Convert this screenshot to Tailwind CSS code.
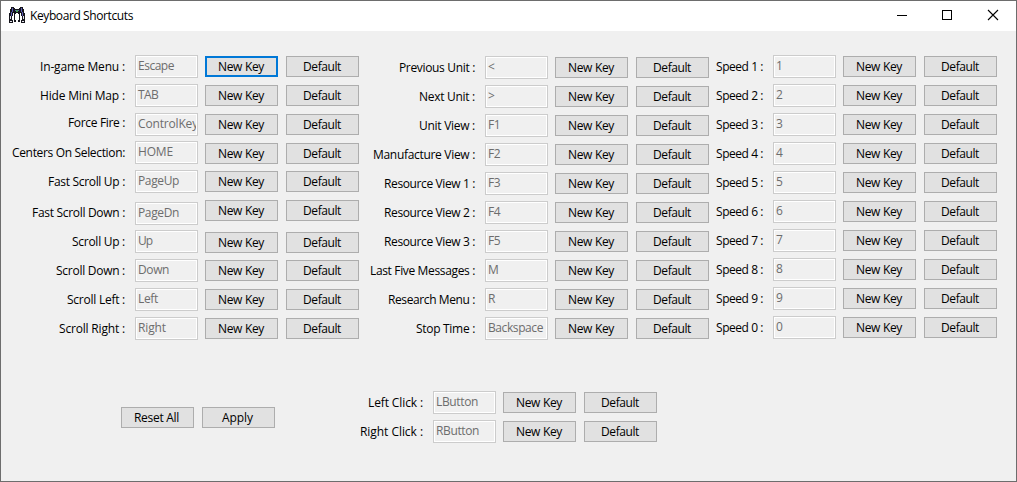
<!DOCTYPE html>
<html lang="en">
<head>
<meta charset="utf-8">
<title>Keyboard Shortcuts</title>
<script src="https://cdn.jsdelivr.net/npm/@tailwindcss/browser@4"></script>
</head>
<body class="w-[1017px] h-[482px] overflow-hidden font-['Open_Sans','Noto_Sans',sans-serif] text-[12px] leading-[17px] text-black">
<div class="w-[1017px] h-[482px] border border-[#6d6d6d] bg-[#f0f0f0] flex flex-col">
  <header class="h-[30px] shrink-0 bg-white flex">
    <svg class="w-4 h-4 mt-[6px] ml-2 shrink-0" viewBox="0 0 16 16" shape-rendering="crispEdges">
      <path fill="#15151c" d="M2 0h3v1h1v1h4V1h1V0h3v2h1v4h1v10h-4v-3h1V9h-1V6h-1v9H9v-2h1V7H9V6H7v1H6v6h1v2H5V6H4v3H3v4h1v3H0V6h1V2h1z"/>
      <path stroke="#5c5cb4" fill="none" d="M3.500 1v4M2.500 5v4M12.500 1v4M13.500 5v4M6 3.500h1M9 3.500h1"/>
      <path stroke="#e4e4ec" fill="none" d="M1 14.500h2M13 14.500h2M1.500 9v3M14.500 9v3"/>
      <path fill="#4c9a5a" d="M7 3h2v2H7z"/>
    </svg>
    <h1 class="ml-[5px] mt-[6px] whitespace-nowrap"><span data-w="103">Keyboard Shortcuts</span></h1>
    <div class="ml-auto flex">
      <svg class="w-[46px] h-[30px]" viewBox="0 0 46 30" shape-rendering="crispEdges"><path stroke="#000" d="M19 14.500h10"/></svg>
      <svg class="w-[46px] h-[30px]" viewBox="0 0 46 30" shape-rendering="crispEdges"><rect x="18.500" y="9.500" width="9" height="9" fill="none" stroke="#000"/></svg>
      <svg class="w-[46px] h-[30px]" viewBox="0 0 46 30"><path stroke="#000" stroke-width="1.100" d="M18 9l10 10M28 9L18 19"/></svg>
    </div>
  </header>
  <main class="flex flex-col">
    <div class="flex pt-[24px] h-[360px]">
      <section id="c1" class="w-[358px] shrink-0"></section>
      <section id="c2" class="w-[350px] shrink-0"></section>
      <section id="c3" class="w-[288px] shrink-0"></section>
    </div>
    <div class="flex">
      <div class="flex gap-2 pl-[120px] pt-[16px] w-[306px] shrink-0">
        <button class="w-[73px] h-[21px] bg-[#e1e1e1] border border-[#adadad] flex justify-center whitespace-nowrap pt-px pr-[2px]"><span data-w="45">Reset All</span></button>
        <button class="w-[73px] h-[21px] bg-[#e1e1e1] border border-[#adadad] flex justify-center whitespace-nowrap pt-px pr-[2px]"><span data-w="31">Apply</span></button>
      </div>
      <section id="c4" class="w-[350px] shrink-0"></section>
    </div>
  </main>
</div>
<script>
// Row: label, label width, key text, key width, label / box / button vertical offsets in a 29px row
const base = [0, 0, 1];
const columns = {
  c1: [
    ['In-game Menu :', 85, 'Escape', 36, 0, 0, 1],
    ['Hide Mini Map :', 85, 'TAB', 20, 0, 0, 1],
    ['Force Fire :', 57, 'ControlKey', 60, -2, 0, 1],
    ['Centers On Selection:', 113, 'HOME', 35, -1, -1, 1],
    ['Fast Scroll Up :', 77, 'PageUp', 41, -1, -1, 0],
    ['Fast Scroll Down :', 93, 'PageDn', 41, 1, 2, 0],
    ['Scroll Up :', 53, 'Up', 14, 1, 1, 3],
    ['Scroll Down :', 69, 'Down', 31, 1, 1, 2],
    ['Scroll Left :', 58, 'Left', 20, 1, 1, 2],
    ['Scroll Right :', 66, 'Right', 28, 1, 1, 2]
  ],
  c2: [
    ['Previous Unit :', 76, '&lt;', 7], ['Next Unit :', 56, '&gt;', 7], ['Unit View :', 56, 'F1', 12],
    ['Manufacture View :', 102, 'F2', 12], ['Resource View 1 :', 91, 'F3', 12],
    ['Resource View 2 :', 91, 'F4', 12], ['Resource View 3 :', 91, 'F5', 12],
    ['Last Five Messages :', 105, 'M', 11], ['Research Menu :', 87, 'R', 7],
    ['Stop Time :', 59, 'Backspace', 55]
  ].map(r => [...r, 1, 1, 2]),
  c3: [1, 2, 3, 4, 5, 6, 7, 8, 9, 0].map(n => ['Speed ' + n + ' :', 47, '' + n, 6, ...base]),
  c4: [['Left Click :', 55, 'LButton', 42, ...base], ['Right Click :', 63, 'RButton', 43, ...base]]
};
const btn = (text, w, top, focus) =>
  `<button class="${focus ? 'w-[73px] h-[21px] bg-[#e1e1e1] border-2 border-[#0078d7] flex justify-center whitespace-nowrap shrink-0 pr-px' : 'w-[73px] h-[21px] bg-[#e1e1e1] border border-[#adadad] flex justify-center whitespace-nowrap shrink-0 pt-px pr-px'}" style="margin-top:${top}px"><span data-w="${w}">${text}</span></button>`;
for (const [id, rows] of Object.entries(columns)) {
  document.getElementById(id).innerHTML = rows.map(([label, lw, key, kw, lt, bt, nt], i) => `
    <div class="h-[29px] flex items-start justify-end">
      <label class="mr-[10px] whitespace-nowrap" style="margin-top:${lt + 3}px"><span data-w="${lw}">${label}</span></label>
      <div class="w-[63px] h-[23px] shrink-0 border border-[#cccccc] p-px bg-white mr-[7px]" style="margin-top:${bt}px">
        <div class="w-[59px] h-[19px] bg-[#f0f0f0] overflow-hidden whitespace-nowrap text-[#6d6d6d] pl-px"><span data-w="${kw}">${key}</span></div>
      </div>
      <div class="flex gap-2 shrink-0 items-start">${btn('New Key', 46, nt, id === 'c1' && i === 0)}${btn('Default', 38, nt)}</div>
    </div>`).join('');
}
// Tighten each caption to its design width, once styles and fonts are in force
function fit() {
  for (const s of document.querySelectorAll('[data-w]')) {
    s.style.letterSpacing = '0px';
    const r = document.createRange();
    r.selectNodeContents(s);
    const natural = r.getBoundingClientRect().width;
    const gap = (+s.dataset.w - natural) / s.textContent.length;
    s.style.letterSpacing = Math.max(-0.9, Math.min(0.6, gap)).toFixed(3) + 'px';
  }
}
addEventListener('load', () => document.fonts.ready.then(fit));
</script>
</body>
</html>
